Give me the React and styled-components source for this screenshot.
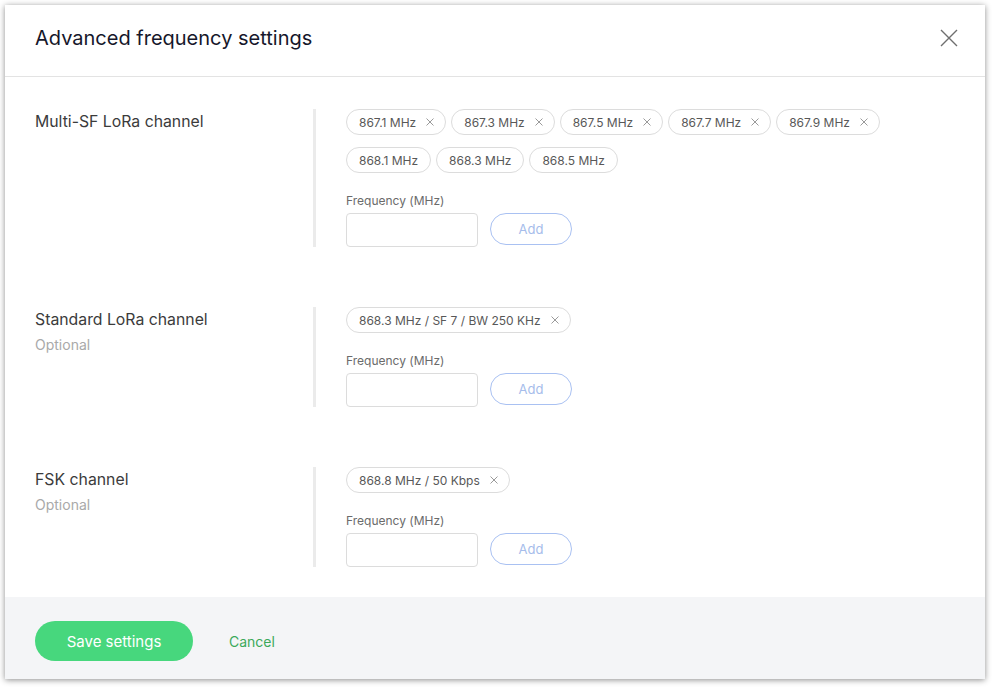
import React, { useState } from 'react';
import styled, { createGlobalStyle } from 'styled-components';

const GlobalStyle = createGlobalStyle`
  html, body {
    margin: 0;
    padding: 0;
    background: #ffffff;
    font-family: Inter, "Noto Sans", sans-serif;
  }
  * { box-sizing: border-box; }
`;

const Page = styled.div`
  padding: 5px;
  width: 994px;
  height: 688px;
`;

const Modal = styled.div`
  width: 980px;
  height: 674px;
  background: #fff;
  box-shadow: 0 1px 6px rgba(0, 0, 0, 0.45);
  display: flex;
  flex-direction: column;
`;

const Header = styled.div`
  height: 72px;
  flex-shrink: 0;
  border-bottom: 1px solid #e3e3e3;
  display: flex;
  align-items: center;
  justify-content: space-between;
  padding: 0 26px 0 30px;
`;

const Title = styled.h2`
  margin: 0;
  font-size: 20px;
  font-weight: 400;
  color: #16172b;
  padding-bottom: 6px;
`;

const CloseBtn = styled.button`
  border: 0;
  background: none;
  padding: 0;
  width: 20px;
  height: 20px;
  margin-bottom: 6px;
  cursor: pointer;
  display: flex;
`;

const Body = styled.div`
  flex: 1;
  padding: 32px 30px 0;
  display: flex;
  flex-direction: column;
  gap: 60px;
`;

const Section = styled.div`
  display: flex;
`;

const LabelCol = styled.div`
  width: 281px;
  flex-shrink: 0;
  border-right: 3px solid #ebebeb;
  padding-top: 3px;
`;

const SectionName = styled.div`
  font-size: 15.8px;
  line-height: 20px;
  color: #3b3b3b;
`;

const Optional = styled.div`
  margin-top: 6px;
  font-size: 14px;
  line-height: 18px;
  color: #a9a9a9;
`;

const FieldCol = styled.div`
  padding-left: 30px;
  flex: 1;
`;

const Chips = styled.div`
  display: flex;
  flex-wrap: wrap;
  gap: 12px 5px;
  max-width: 540px;
`;

const Chip = styled.div`
  height: 26px;
  border: 1px solid #dcdcdc;
  border-radius: 13px;
  padding: ${p => (p.removable ? '0 11px 0 12px' : '0 12px')};
  display: flex;
  align-items: center;
  gap: 10px;
  font-size: 12px;
  color: #585858;
  white-space: nowrap;
`;

const Remove = styled.span`
  display: flex;
  cursor: pointer;
`;

const FieldLabel = styled.div`
  margin-top: 20px;
  font-size: 12px;
  line-height: 16px;
  color: #6b6b6b;
`;

const InputRow = styled.div`
  margin-top: 4px;
  display: flex;
  gap: 12px;
`;

const Input = styled.input`
  width: 132px;
  height: 34px;
  border: 1px solid #dcdcdc;
  border-radius: 4px;
  outline: none;
  font-family: inherit;
  font-size: 13px;
  padding: 0 8px;
`;

const AddBtn = styled.button`
  width: 82px;
  height: 32px;
  border: 1px solid #a9c1f2;
  border-radius: 16px;
  background: #fff;
  color: #a6bdeb;
  font-family: inherit;
  font-size: 13px;
  cursor: pointer;
`;

const Footer = styled.div`
  height: 82px;
  flex-shrink: 0;
  background: #f4f5f7;
  display: flex;
  align-items: flex-start;
  gap: 36px;
  padding: 24px 30px 0;
`;

const SaveBtn = styled.button`
  width: 158px;
  height: 40px;
  border: 0;
  border-radius: 20px;
  background: #47d77d;
  color: #fff;
  font-family: inherit;
  font-size: 15px;
  cursor: pointer;
`;

const CancelBtn = styled.button`
  border: 0;
  background: none;
  padding: 0;
  height: 40px;
  color: #3ca95b;
  font-family: inherit;
  font-size: 14px;
  cursor: pointer;
`;

const sections = [
  {
    name: 'Multi-SF LoRa channel',
    chips: [
      ['867.1 MHz', true],
      ['867.3 MHz', true],
      ['867.5 MHz', true],
      ['867.7 MHz', true],
      ['867.9 MHz', true],
      ['868.1 MHz', false],
      ['868.3 MHz', false],
      ['868.5 MHz', false],
    ],
  },
  {
    name: 'Standard LoRa channel',
    optional: true,
    chips: [['868.3 MHz / SF 7 / BW 250 KHz', true]],
  },
  {
    name: 'FSK channel',
    optional: true,
    chips: [['868.8 MHz / 50 Kbps', true]],
  },
];

const FrequencySection = ({ name, optional, chips }) => {
  const [value, setValue] = useState('');
  return (
    <Section>
      <LabelCol>
        <SectionName>{name}</SectionName>
        {optional && <Optional>Optional</Optional>}
      </LabelCol>
      <FieldCol>
        <Chips>
          {chips.map(([label, removable]) => (
            <Chip key={label} removable={removable}>
              {label}
              {removable && (
                <Remove>
                  <svg width="8" height="8" viewBox="0 0 8 8">
                    <path d="M0.5 0.5 L7.5 7.5 M7.5 0.5 L0.5 7.5" stroke="#9a9a9a" strokeWidth="1" fill="none" />
                  </svg>
                </Remove>
              )}
            </Chip>
          ))}
        </Chips>
        <FieldLabel>Frequency (MHz)</FieldLabel>
        <InputRow>
          <Input value={value} onChange={e => setValue(e.target.value)} />
          <AddBtn>Add</AddBtn>
        </InputRow>
      </FieldCol>
    </Section>
  );
};

const App = () => {
  return (
    <Page>
      <GlobalStyle />
      <Modal>
        <Header>
          <Title>Advanced frequency settings</Title>
          <CloseBtn aria-label="Close">
            <svg width="20" height="20" viewBox="0 0 20 20">
              <path d="M2 2 L18 18 M18 2 L2 18" stroke="#6f6f6f" strokeWidth="1.4" fill="none" />
            </svg>
          </CloseBtn>
        </Header>
        <Body>
          {sections.map(s => (
            <FrequencySection key={s.name} {...s} />
          ))}
        </Body>
        <Footer>
          <SaveBtn>Save settings</SaveBtn>
          <CancelBtn>Cancel</CancelBtn>
        </Footer>
      </Modal>
    </Page>
  );
};

export default App;
